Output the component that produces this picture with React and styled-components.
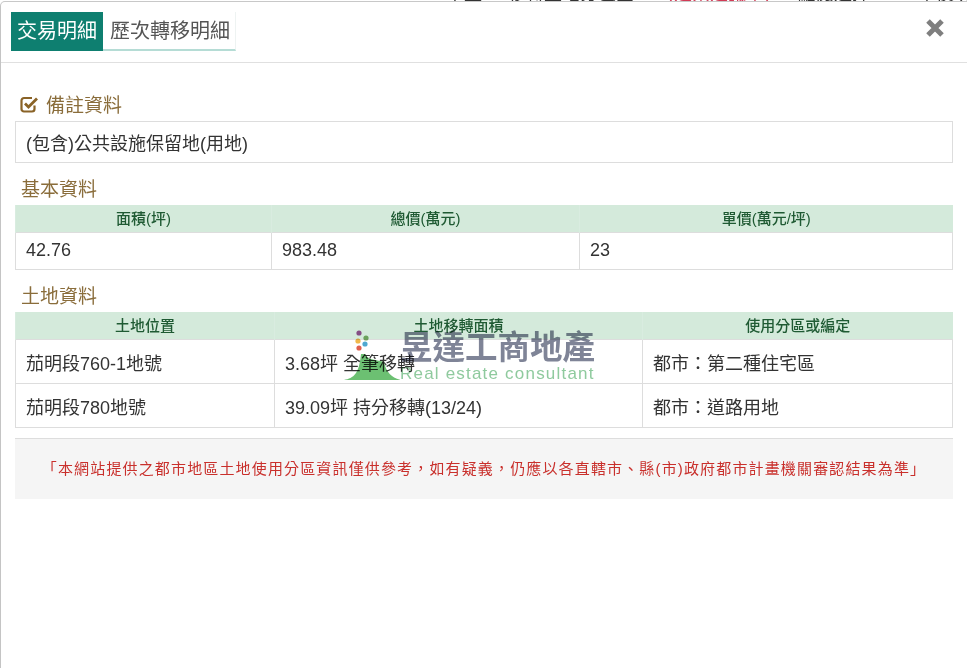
import React from 'react';
import styled, { createGlobalStyle } from 'styled-components';

const FONT = '"Liberation Sans", "Noto Sans CJK TC", sans-serif';

const GlobalStyle = createGlobalStyle`
  html, body {
    margin: 0;
    padding: 0;
    background: #fff;
    overflow: hidden;
  }
  * { box-sizing: border-box; }
`;

const Page = styled.div`
  position: relative;
  width: 967px;
  height: 668px;
  overflow: hidden;
  background: #fff;
  font-family: ${FONT};
`;

// the page behind the dialog only peeks out along the top edge
const BehindStrip = styled.div`
  position: absolute;
  top: 0;
  left: 0;
  right: 0;
  height: 3px;
  overflow: hidden;
`;

const BehindText = styled.span`
  position: absolute;
  top: -15px;
  left: ${(p) => p.$x}px;
  font-size: 18px;
  line-height: 18px;
  white-space: nowrap;
  color: ${(p) => p.$color || '#333'};
`;

const Modal = styled.div`
  position: relative;
  height: 667px;
  margin-top: 1px;
  background: #fff;
  border-left: 1px solid #c4c4c4;
  border-top: 1px solid #c8c8c8;
  border-top-left-radius: 5px;
`;

const Header = styled.div`
  display: flex;
  align-items: flex-start;
  justify-content: space-between;
  height: 61px;
  padding: 10px 21px 0 10px;
  border-bottom: 1px solid #e0e0e0;
`;

const Tabs = styled.div`
  display: flex;
`;

const Tab = styled.div`
  display: flex;
  align-items: center;
  height: 39px;
  padding: 0 ${(p) => (p.$active ? 6 : 5)}px 2px ${(p) => (p.$active ? 6 : 7)}px;
  font-size: 20px;
  color: ${(p) => (p.$active ? '#fff' : '#555')};
  background: ${(p) => (p.$active ? '#0e7f70' : '#fff')};
  border-bottom: 2px solid ${(p) => (p.$active ? '#0e7f70' : '#b5dcd5')};
  border-right: ${(p) => (p.$active ? '0' : '1px solid #eef3f2')};
`;

const CloseIcon = styled.svg`
  display: block;
  width: 20px;
  height: 20px;
  margin-top: 6px;
  margin-right: 1px;
  color: #7f7f7f;
`;

const Body = styled.div`
  padding: 0 14px 0 14px;
`;

const SectionTitle = styled.h4`
  display: flex;
  align-items: center;
  gap: 7px;
  height: 26px;
  margin: ${(p) => p.$top}px 0 3px;
  padding-left: ${(p) => p.$indent}px;
  padding-bottom: ${(p) => p.$lift}px;
  font-size: 19px;
  font-weight: 400;
  color: #8a6d3b;
`;

const CheckIcon = styled.svg`
  display: block;
  width: 19px;
  height: 18px;
  color: #8a6327;
`;

const NoteBox = styled.div`
  height: 42px;
  padding: 0 10px;
  display: flex;
  align-items: center;
  border: 1px solid #ddd;
  font-size: 18px;
  color: #333;
`;

const Table = styled.table`
  width: 938px;
  table-layout: fixed;
  border-collapse: collapse;
`;

const Col = styled.col`
  width: ${(p) => p.$w}px;
`;

const Th = styled.th`
  height: ${(p) => p.$h}px;
  padding: 0 0 1px;
  background: #d4eadb;
  border-left: 1px solid #d9ece0;
  font-size: 15px;
  font-weight: 500;
  text-align: center;
  color: #1f5a33;
`;

const Td = styled.td`
  height: ${(p) => p.$h}px;
  padding: 0 10px;
  border: 1px solid #ddd;
  font-size: 18px;
  color: #333;
`;

const Notice = styled.div`
  display: flex;
  align-items: center;
  justify-content: center;
  height: 61px;
  margin-top: 10px;
  padding-bottom: 3px;
  background: #f5f5f5;
  border-top: 1px solid #ddd;
  font-size: 15px;
  letter-spacing: 1.15px;
  white-space: nowrap;
  color: #c9302c;
`;

const Watermark = styled.div`
  position: absolute;
  left: 341px;
  top: 328px;
  display: flex;
  mix-blend-mode: multiply;
  pointer-events: none;
`;

const WatermarkLogo = styled.svg`
  display: block;
  width: 58px;
  height: 52px;
`;

const WatermarkText = styled.div`
  display: flex;
  flex-direction: column;
`;

const WatermarkName = styled.div`
  font-size: 32.5px;
  line-height: 36px;
  font-weight: 700;
  white-space: nowrap;
  color: #7f8497;
`;

const WatermarkSlogan = styled.div`
  font-size: 17px;
  line-height: 16px;
  letter-spacing: 1.2px;
  white-space: nowrap;
  color: #8fca9e;
`;

const basicColumns = [256, 308, 373];
const landColumns = [259, 368, 310];

const landRows = [
  { place: '茄明段760-1地號', area: '3.68坪 全筆移轉', zone: '都市：第二種住宅區' },
  { place: '茄明段780地號', area: '39.09坪 持分移轉(13/24)', zone: '都市：道路用地' },
];

export default function App() {
  return (
    <Page>
      <GlobalStyle />
      <BehindStrip>
        <BehindText $x={446}>單量</BehindText>
        <BehindText $x={508}>移轉土地分區圖</BehindText>
        <BehindText $x={668} $color="#d23a55">(建案建議中)</BehindText>
        <BehindText $x={798}>點閱選擇</BehindText>
        <BehindText $x={918}>單價明</BehindText>
      </BehindStrip>
      <Modal>
        <Header>
          <Tabs>
            <Tab $active>交易明細</Tab>
            <Tab>歷次轉移明細</Tab>
          </Tabs>
          <CloseIcon viewBox="0 0 20 20">
            <path d="M3 3 L17 17 M17 3 L3 17" stroke="currentColor" strokeWidth="5" fill="none" />
          </CloseIcon>
        </Header>
        <Body>
          <SectionTitle $top={29} $indent={5} $lift={3}>
            <CheckIcon viewBox="0 0 19 18">
              <path d="M14.5 10.5 V14 A2.5 2.5 0 0 1 12 16.5 H4 A2.5 2.5 0 0 1 1.5 14 V5.5 A2.5 2.5 0 0 1 4 3 H12" stroke="currentColor" strokeWidth="2.2" fill="none" />
              <path d="M5 8.5 L8.5 12 L17 3.5" stroke="currentColor" strokeWidth="2.8" fill="none" />
            </CheckIcon>
            備註資料
          </SectionTitle>
          <NoteBox>(包含)公共設施保留地(用地)</NoteBox>

          <SectionTitle $top={13} $indent={6} $lift={3}>基本資料</SectionTitle>
          <Table>
            <colgroup>
              {basicColumns.map((w) => <Col key={w} $w={w} />)}
            </colgroup>
            <thead>
              <tr>
                <Th $h={27}>面積(坪)</Th>
                <Th $h={27}>總價(萬元)</Th>
                <Th $h={27}>單價(萬元/坪)</Th>
              </tr>
            </thead>
            <tbody>
              <tr>
                <Td $h={37}>42.76</Td>
                <Td $h={37}>983.48</Td>
                <Td $h={37}>23</Td>
              </tr>
            </tbody>
          </Table>

          <SectionTitle $top={13} $indent={6} $lift={2}>土地資料</SectionTitle>
          <Table>
            <colgroup>
              {landColumns.map((w) => <Col key={w} $w={w} />)}
            </colgroup>
            <thead>
              <tr>
                <Th $h={28}>土地位置</Th>
                <Th $h={28}>土地移轉面積</Th>
                <Th $h={28}>使用分區或編定</Th>
              </tr>
            </thead>
            <tbody>
              {landRows.map((row) => (
                <tr key={row.place}>
                  <Td $h={44}>{row.place}</Td>
                  <Td $h={44}>{row.area}</Td>
                  <Td $h={44}>{row.zone}</Td>
                </tr>
              ))}
            </tbody>
          </Table>

          <Notice>「本網站提供之都市地區土地使用分區資訊僅供參考，如有疑義，仍應以各直轄市、縣(市)政府都市計畫機關審認結果為準」</Notice>
        </Body>
        <Watermark>
          <WatermarkLogo viewBox="0 0 58 52">
            <circle cx="17" cy="3" r="2.6" fill="#a0559a" />
            <circle cx="24" cy="8" r="2.6" fill="#7fb06a" />
            <circle cx="16" cy="11" r="2.6" fill="#f0b84a" />
            <circle cx="23" cy="14" r="2.6" fill="#4fa8d0" />
            <circle cx="17" cy="18" r="2.6" fill="#e0604f" />
            <path d="M2 50 C12 48 17 44 19 24 L23 24 C25 30 36 30 42 32 C44 42 50 48 59 50 Z" fill="#6cc072" />
          </WatermarkLogo>
          <WatermarkText>
            <WatermarkName>昱達工商地產</WatermarkName>
            <WatermarkSlogan>Real estate consultant</WatermarkSlogan>
          </WatermarkText>
        </Watermark>
      </Modal>
    </Page>
  );
}
